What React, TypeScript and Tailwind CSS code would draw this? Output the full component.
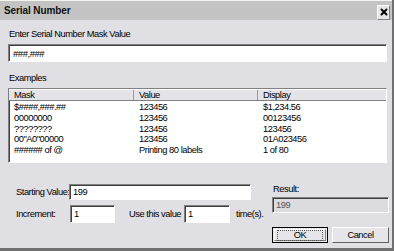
import { X } from 'lucide-react';

const sunken =
  'border border-t-[#808080] border-l-[#808080] border-b-white border-r-white shadow-[inset_1px_1px_0_#404040]';

const rows = [
  ['$####,###.##', '123456', '$1,234.56'],
  ['00000000', '123456', '00123456'],
  ['????????', '123456', '123456'],
  ['00"A0"00000', '123456', '01A023456'],
  ['###### of @', 'Printing 80 labels', '1 of 80'],
];

function TextBox({ value, className }: { value: string; className: string }) {
  return (
    <div className={`${sunken} bg-white flex items-center pl-[3px] text-black shrink-0 ${className}`}>
      {value}
    </div>
  );
}

export default function App() {
  return (
    <div
      className="w-[394px] h-[251px] bg-[#e0dfe3] border-r-2 border-b-[3px] border-r-[#707070] border-b-[#707070] flex flex-col text-[9.3px] leading-[11px] tracking-[-0.45px] text-black whitespace-nowrap overflow-hidden"
      style={{ fontFamily: '"Liberation Sans", Arial, sans-serif' }}
    >
      {/* Title bar */}
      <div className="h-[20px] bg-[#c4c4c4] border-t border-t-[#f4f4f0] flex items-center justify-between pl-[4px] pr-[2px]">
        <span className="text-[10px] font-bold tracking-[-0.1px] text-[#111]">Serial Number</span>
        <button className="w-[13px] h-[15px] mt-[3px] bg-[#e6e6e6] border border-t-white border-l-white border-b-[#808080] border-r-[#808080] flex items-center justify-center">
          <X size={10} strokeWidth={4.5} className="text-black" />
        </button>
      </div>

      <div className="flex flex-col pl-[8px] pr-[5px]">
        <div className="mt-[9px] pl-[1px]">Enter Serial Number Mask Value</div>
        <TextBox value="###,###" className="mt-[4px] h-[18px] w-[379px] pl-[4px] text-[9.5px]" />

        <div className="mt-[11px] pl-[1px]">Examples</div>

        {/* List view */}
        <div className={`${sunken} bg-white mt-[4px] h-[75px] w-[379px] flex flex-col`}>
          <div className="grid grid-cols-[125px_124px_1fr] h-[12px] bg-[#e4e3e8] border-t border-t-white border-b border-b-[#808080]">
            <div className="pl-[5px] border-r border-r-[#9a9a9a] leading-[10px]">Mask</div>
            <div className="pl-[5px] border-r border-r-[#9a9a9a] leading-[10px]">Value</div>
            <div className="pl-[5px] leading-[10px]">Display</div>
          </div>
          <div className="pt-[1px]">
            {rows.map((r) => (
              <div key={r[0]} className="grid grid-cols-[125px_124px_1fr] leading-[10.75px]">
                <div className="pl-[5px]">{r[0]}</div>
                <div className="pl-[5px]">{r[1]}</div>
                <div className="pl-[5px]">{r[2]}</div>
              </div>
            ))}
          </div>
        </div>

        {/* Bottom controls */}
        <div className="flex mt-[21px]">
          <div className="w-[264px] shrink-0 pl-[8px] flex flex-col">
            <div className="flex items-center h-[16px]">
              <span className="w-[53px] shrink-0">Starting Value:</span>
              <TextBox value="199" className="h-[16px] w-[182px]" />
            </div>
            <div className="flex items-center mt-[5px]">
              <span className="w-[54px] shrink-0">Increment:</span>
              <TextBox value="1" className="h-[18px] w-[45px]" />
              <span className="ml-[14px] w-[55px] shrink-0">Use this value</span>
              <TextBox value="1" className="h-[18px] w-[46px]" />
              <span className="ml-[6px]">time(s).</span>
            </div>
          </div>
          <div className="flex flex-col w-[117px] shrink-0">
            <div className="pl-[1px]">Result:</div>
            <div className={`${sunken} bg-[#dcdbdf] mt-[2px] h-[16px] flex items-center pl-[3px] text-[#555]`}>199</div>
            <div className="flex gap-[4px] mt-[14px]">
              <button className="w-[56px] h-[16px] border border-black bg-[#e6e5e9] p-[1px]">
                <div className="h-full border border-t-white border-l-white border-b-[#808080] border-r-[#808080] flex items-center justify-center">
                  <span className="border border-dotted border-[#555] w-[46px] leading-[9px]">OK</span>
                </div>
              </button>
              <button className="w-[57px] h-[16px] bg-[#e6e5e9] border border-t-white border-l-white border-b-[#606060] border-r-[#606060] flex items-center justify-center">
                Cancel
              </button>
            </div>
          </div>
        </div>
      </div>
    </div>
  );
}
